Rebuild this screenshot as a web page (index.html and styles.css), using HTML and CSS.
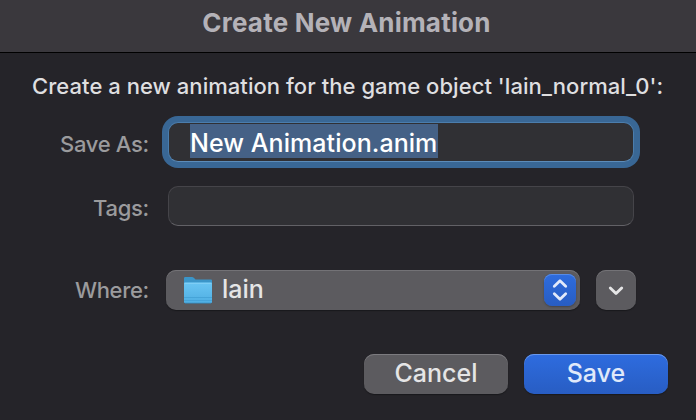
FILE: index.html
```
<!DOCTYPE html>
<html lang="en">
<head>
<meta charset="utf-8">
<title>Create New Animation</title>
<link rel="stylesheet" href="styles.css">
</head>
<body>
<main class="dialog">
  <header class="titlebar"><span class="title">Create New Animation</span></header>
  <p class="message"><span>Create a new animation for the game object 'lain_normal_0':</span></p>
  <div class="row row-name">
    <span class="label label-name">Save As:</span>
    <div class="field field-focus"><span class="selection">New Animation.anim</span></div>
  </div>
  <div class="row row-tags">
    <span class="label label-tags">Tags:</span>
    <div class="field"></div>
  </div>
  <div class="row row-where">
    <span class="label label-where">Where:</span>
    <div class="popup">
      <svg class="folder" width="30" height="28" viewBox="0 0 30 28">
        <defs>
          <linearGradient id="front" x1="0" y1="0" x2="0" y2="1">
            <stop offset="0" stop-color="#6ac5f3"/>
            <stop offset="1" stop-color="#4faee2"/>
          </linearGradient>
        </defs>
        <path d="M1 1.2Q1 0 2.2 0H9Q10 0 10.8 .8L12.5 2.6H28Q29 2.6 29 3.6V24.5Q29 26 27.8 26H2.2Q1 26 1 24.5Z" fill="#3b95c8"/>
        <path d="M1 6.6Q1 5.6 2 5.6H28Q29 5.6 29 6.6V24.5Q29 26 27.8 26H2.2Q1 26 1 24.5Z" fill="url(#front)"/>
        <path d="M1.5 6.3H28.5" stroke="#84d1f7"/>
        <path d="M1 20.5H29M1 23.5H29" stroke="#429fd4" stroke-width=".8"/>
        <path d="M2 26.2H28" stroke="#3688b8" stroke-width=".8"/>
      </svg>
      <span class="place">lain</span>
      <span class="stepper">
        <svg width="32" height="32" viewBox="0 0 32 32">
          <path d="M10.3 12.2L16 6.8L21.7 12.2M10.3 19.8L16 25.2L21.7 19.8" fill="none" stroke="#e2eafa" stroke-width="2.8" stroke-linecap="round" stroke-linejoin="round"/>
        </svg>
      </span>
    </div>
    <div class="expand">
      <svg width="40" height="40" viewBox="0 0 40 40">
        <path d="M14.3 18L20 23.5L25.7 18" fill="none" stroke="#e6e6e7" stroke-width="2.9" stroke-linecap="round" stroke-linejoin="round"/>
      </svg>
    </div>
  </div>
  <footer class="actions">
    <div class="button cancel"><span>Cancel</span></div>
    <div class="button save"><span>Save</span></div>
  </footer>
</main>
</body>
</html>
```
FILE: styles.css
```
* { box-sizing: border-box; }
body { margin: 0; background: #252429; }
.dialog {
  width: 696px;
  height: 420px;
  overflow: hidden;
  background: #252429;
  color: #dfdfe0;
  font-family: Inter, "Liberation Sans", sans-serif;
  font-size: 22px;
  font-weight: 500;
  white-space: nowrap;
}
.titlebar {
  height: 53px;
  padding: 8px 3px 0 0;
  background: #3a383d;
  border-bottom: 1px solid #000;
  text-align: center;
  line-height: 30px;
}
.title { color: #b4b2b8; font-size: 26px; font-weight: 700; letter-spacing: .2px; }
.message { margin: 18px 0 0 32px; height: 30px; line-height: 30px; letter-spacing: .05px; }
.row { display: flex; height: 40px; }
.row-name { margin-top: 21px; }
.row-tags { margin-top: 24px; }
.row-where { margin-top: 44px; }
.label {
  width: 149px;
  margin-right: 19px;
  flex: none;
  line-height: 45px;
  text-align: right;
  letter-spacing: -.3px;
  color: #9b9b9d;
}
.label-where { margin-right: 17px; line-height: 41px; }
.field {
  width: 466px;
  height: 40px;
  border: 1px solid #454449;
  border-bottom-color: #626166;
  border-radius: 10px;
  background: #303034;
}
.field-focus {
  padding: 1px 0 0 21px;
  border-color: #4b7dac;
  border-bottom-color: #5c8cb9;
  box-shadow: 0 0 0 6px #396795;
}
.selection {
  display: inline-block;
  width: 248px;
  height: 34px;
  line-height: 38px;
  background: #456186;
  color: #fff;
  font-size: 25px;
  letter-spacing: .06px;
}
.popup {
  display: flex;
  align-items: center;
  width: 414px;
  height: 40px;
  padding: 0 4px 0 17px;
  border-radius: 10px;
  background: #5c5b5f;
  box-shadow: inset 0 1px #737276, 0 1px 1px #19191c;
}
.folder { flex: none; margin-top: 2px; }
.place { margin-left: 9px; line-height: 38px; height: 40px; font-size: 25px; color: #e5e5e6; }
.stepper {
  margin-left: auto;
  width: 32px;
  height: 32px;
  border-radius: 8px;
  background: linear-gradient(#2e6cdd, #285dc2);
  box-shadow: inset 0 1px #578be5, 0 1px 2px #444347;
}
svg { display: block; }
.expand {
  width: 40px;
  margin-left: 16px;
  border-radius: 10px;
  background: #5c5b5f;
  box-shadow: inset 0 1px #737276, 0 1px 1px #19191c;
}
.actions { display: flex; justify-content: flex-end; gap: 16px; margin: 44px 28px 0 0; }
.button {
  width: 144px;
  height: 40px;
  border-radius: 10px;
  line-height: 39px;
  text-align: center;
  font-size: 25px;
}
.cancel { background: #5c5b5f; color: #e5e5e6; box-shadow: inset 0 1px #7c7b7f, 0 1px 1px #19191c; }
.save { background: linear-gradient(#2e6cdf, #285dc3); color: #e0e9fa; box-shadow: inset 0 1px #6a99ec, 0 1px 1px #19191c; }
```
